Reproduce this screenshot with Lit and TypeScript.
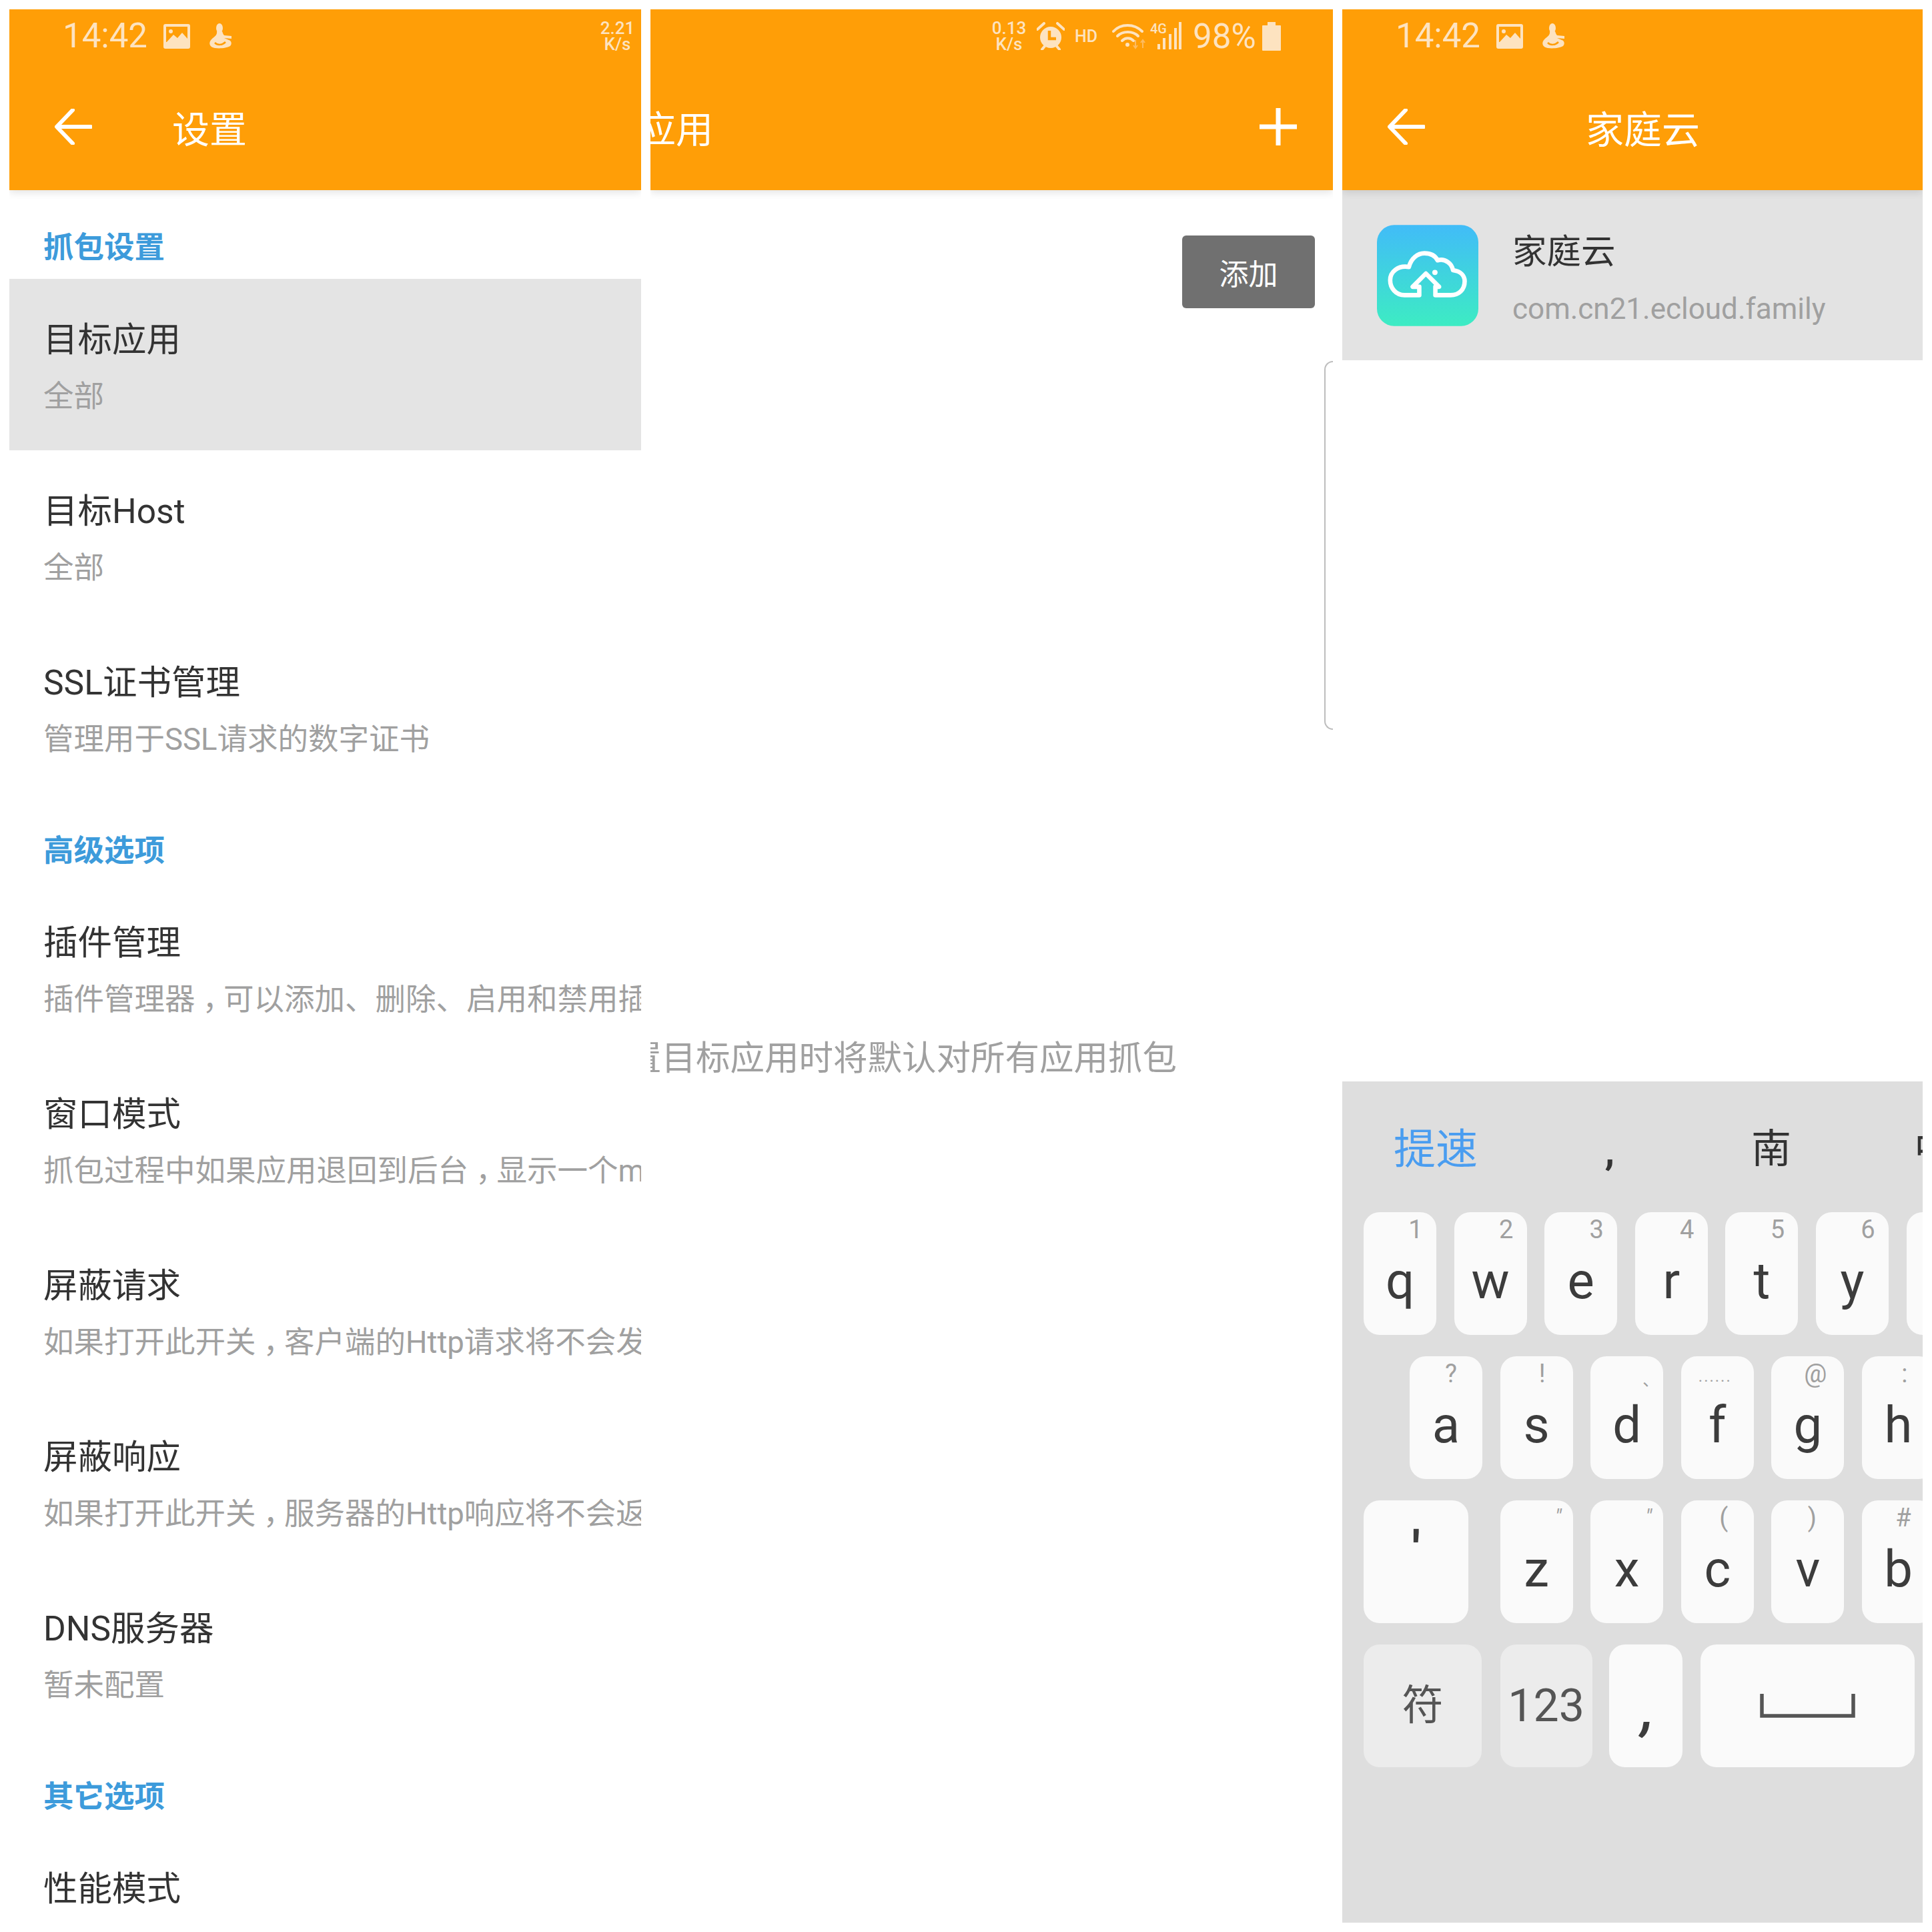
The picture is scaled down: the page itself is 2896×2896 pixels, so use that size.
import { LitElement, html, css } from "lit";
import { customElement } from "lit/decorators.js";

type K = { k: string; h?: string; r?: number; c?: string };

const row1: K[] = [
  { k: "q", h: "1", r: 31 }, { k: "w", h: "2", r: 31 }, { k: "e", h: "3", r: 31 },
  { k: "r", h: "4", r: 31 }, { k: "t", h: "5", r: 31 }, { k: "y", h: "6", r: 31 }, { k: "u", h: "7", r: 31 },
];
const row2: K[] = [
  { k: "a", h: "?", r: 47 }, { k: "s", h: "!", r: 46 }, { k: "d", h: "、", r: 19, c: "low" },
  { k: "f", h: "......", r: 58, c: "dots" }, { k: "g", h: "@", r: 43 }, { k: "h", h: ":", r: 45 },
];
const row3: K[] = [
  { k: "z", h: "\"", r: 22, c: "quote" }, { k: "x", h: "\"", r: 22, c: "quote" },
  { k: "c", h: "(", r: 45 }, { k: "v", h: ")", r: 48 }, { k: "b", h: "#", r: 47 },
];

const pictureIcon = html`<svg class="ico" width="40" height="37" viewBox="0 0 40 37">
  <rect width="40" height="37" rx="3" fill="#fde3c0"/>
  <rect x="4" y="4" width="32" height="23" fill="#ff9e07"/>
  <circle cx="11" cy="11" r="3" fill="#fde3c0"/>
  <path d="M4 28 L15 16 L21 21 L28 13 L36 22 V29 H4Z" fill="#fde3c0"/>
</svg>`;

const personIcon = html`<svg class="ico" width="36" height="38" viewBox="0 0 36 38">
  <ellipse cx="17" cy="7" rx="5" ry="7" fill="#fde3c0"/>
  <path d="M13 12 C14 18 9 20 5 24 C0 29 2 36 10 37 C18 38 28 37 33 34 C36 31 35 26 31 25 L24 22 L35 23 L35 19 L24 18 C22 16 22 14 21 12 Z" fill="#fde3c0"/>
  <path d="M10 29 C14 33 21 33 26 28" stroke="#ff9e07" stroke-width="2.5" fill="none"/>
</svg>`;

const alarmIcon = html`<svg class="ico" width="42" height="42" viewBox="0 0 42 42">
  <circle cx="21" cy="23" r="16" fill="#fde3c0"/>
  <path d="M19 13 V25 H29" stroke="#ff9e07" stroke-width="4.5" fill="none"/>
  <path d="M1 11 L11 2 M41 11 L31 2" stroke="#fde3c0" stroke-width="4" stroke-linecap="round"/>
  <path d="M8 41 L13 35 M34 41 L29 35" stroke="#fde3c0" stroke-width="4" stroke-linecap="round"/>
</svg>`;

const wifiIcon = html`<svg class="ico wifi" width="52" height="40" viewBox="0 0 52 40">
  <g fill="none" stroke="#fde3c0" stroke-width="4" stroke-linecap="round">
    <path d="M2 13 C13 1 33 1 45 13"/>
    <path d="M8 20 C16 12 31 12 39 20"/>
    <path d="M15 27 C20 22 27 22 32 27"/>
  </g>
  <circle cx="23" cy="33" r="3" fill="#fde3c0"/>
  <g fill="none" stroke="#fdbb5f" stroke-width="2">
    <path d="M35 26 V38 M32 34 L35 38 L38 34"/>
    <path d="M46 38 V26 M43 30 L46 26 L49 30"/>
  </g>
</svg>`;

const signalIcon = html`<svg class="ico" width="48" height="42" viewBox="0 0 48 42">
  <text x="0" y="17" class="sigtext">4G</text>
  <g fill="#fde3c0">
    <rect x="11" y="33" width="4" height="8"/>
    <rect x="19" y="24" width="4" height="17"/>
    <rect x="28" y="18" width="4" height="23"/>
    <rect x="36" y="9" width="4" height="32"/>
    <rect x="43" y="0" width="4" height="41"/>
  </g>
</svg>`;

const batteryIcon = html`<svg class="ico" width="28" height="43" viewBox="0 0 28 43">
  <path d="M8 0 H20 V5 H27 Q28 5 28 6 V42 Q28 43 27 43 H1 Q0 43 0 42 V6 Q0 5 1 5 H8Z" fill="#fde3c0"/>
</svg>`;

const backIcon = html`<svg class="back" width="56" height="54" viewBox="0 0 56 54">
  <path d="M54 27 H4 M27 2 L3 27 L27 52" fill="none" stroke="#fff" stroke-width="6" stroke-linecap="round" stroke-linejoin="round"/>
</svg>`;

const plusIcon = html`<svg class="plus" width="56" height="58" viewBox="0 0 56 58">
  <path d="M28 1 V57 M0 29 H56" stroke="#fff" stroke-width="7" fill="none"/>
</svg>`;

const cloudIcon = html`<svg class="appicon" width="152" height="152" viewBox="70 50 460 458">
  <defs><linearGradient id="g" x1="0" y1="0" x2="0" y2="1"><stop offset="0" stop-color="#41bcf8"/><stop offset="1" stop-color="#3decc3"/></linearGradient></defs>
  <rect x="70" y="50" width="460" height="458" rx="78" fill="url(#g)"/>
  <path d="M262 368 H195 C155 368 130 335 130 300 C130 262 165 232 215 240 C225 200 255 178 285 178 C315 178 335 190 345 210 C380 200 410 225 415 255 C450 260 468 280 468 305 C468 345 440 368 405 368 H335 V330 H352 L292 270 L232 330 H262 Z" fill="none" stroke="#fff" stroke-width="20" stroke-linejoin="round"/>
  <circle cx="333" cy="265" r="12" fill="#fff"/>
</svg>`;

const spaceIcon = html`<svg width="143" height="36" viewBox="0 0 143 36">
  <path d="M3 0 V33 H140 V0" fill="none" stroke="#555" stroke-width="5.5"/>
</svg>`;

@customElement("app-root")
export class AppRoot extends LitElement {
  static styles = css`
    :host { display: block; width: 2896px; height: 2896px; background: #fff;
      font-family: Roboto, "Noto Sans CJK SC", sans-serif; }
    * { box-sizing: border-box; }
    .page { display: grid; grid-template-columns: 947px 1023px 870px; column-gap: 14px; padding: 14px; height: 2896px; }
    .panel { position: relative; height: 2868px; overflow: hidden; background: #fff; display: flex; flex-direction: column; }
    .appbar { height: 271px; flex: none; background: #ff9e07; box-shadow: 0 3px 12px rgba(0,0,0,.12); position: relative; z-index: 2; }
    .status { height: 80px; display: flex; align-items: center; color: #fde3c0; padding-left: 80px; }
    .time { font-size: 51px; width: 123px; line-height: 80px; margin-right: 28px; white-space: nowrap; font-weight: 400; }
    .ico { display: block; flex: none; }
    .gapico { margin-left: 27px; }
    .speed { font-size: 26px; line-height: 24px; font-weight: 500; text-align: center; width: 53px; white-space: nowrap; }
    .speed.end { margin-left: auto; margin-right: 9px; }
    .status.right { justify-content: flex-end; padding: 0 78px 0 0; }
    .hd { font-size: 25px; font-weight: 500; margin: 0 23px 0 15px; width: 33px; }
    .alarm { margin-left: 15px; }
    .wifi { margin-right: 5px; }
    .sigtext { font: 500 20px Roboto, sans-serif; fill: #fde3c0; }
    .pct { font-size: 51px; margin: 0 12px 0 16px; font-weight: 400; width: 92px; white-space: nowrap; }
    .bar { height: 191px; display: flex; align-items: center; color: #fff; font-size: 56px; white-space: nowrap; }
    .back { margin-left: 68px; flex: none; }
    .t1 { margin-left: 120px; }
    .t2 { margin-left: -130px; }
    .t3 { margin-left: 241px; font-size: 57px; }
    .plus { margin-left: auto; margin-right: 54px; }

    .section { height: 133px; padding-top: 57px; padding-left: 51px; font-size: 45.5px; line-height: 60px; font-weight: 700; color: #3d9bdb; flex: none; }
    .row { height: 257px; padding: 62px 0 0 51px; flex: none; white-space: nowrap; }
    .row.sel { background: #e4e4e4; }
    .title { font-size: 51.5px; line-height: 60px; color: #333; }
    .desc { font-size: 45.5px; line-height: 54px; margin-top: 28px; color: #a0a0a0; }
    .fwc { display: inline-block; transform: translateX(11px); margin-right: -3px; }

    .addbtn { align-self: flex-end; margin: 68px 27px 0 0; width: 199px; height: 109px; border-radius: 6px; background: #707070; color: #fff; font-size: 44px; display: flex; align-items: center; justify-content: center; }
    .empty { margin-top: 1095px; padding-right: 234px; display: flex; justify-content: flex-end; font-size: 51.5px; line-height: 60px; color: #a0a0a0; white-space: nowrap; }
    .edge { position: absolute; right: 0; top: 527px; width: 13px; height: 553px; border: 2px solid #bdbdbd; border-right: none; border-radius: 18px 0 0 18px; }

    .app { height: 255px; flex: none; background: #e3e3e3; display: flex; align-items: center; padding-left: 52px; }
    .appicon { display: block; flex: none; }
    .appinfo { margin-left: 51px; margin-top: 13px; white-space: nowrap; }
    .appname { font-size: 51.5px; line-height: 60px; color: #333; }
    .apppkg { font-size: 44px; line-height: 54px; margin-top: 28px; color: #a0a0a0; }

    .keyboard { margin-top: auto; height: 1261px; flex: none; background: #dedede; overflow: hidden; }
    .cands { height: 196px; display: flex; align-items: center; padding: 0 0 5px 77px; white-space: nowrap; font-size: 60px; color: #333; }
    .cand-hi { font-size: 63px; color: #4a9df0; }
    .cand-comma { width: 40px; margin-left: 178px; font-weight: 700; text-align: center; padding-top: 16px; flex: none; }
    .cand-nan { margin-left: 192px; flex: none; }
    .cand-zh { margin-left: 184px; flex: none; }
    .krow { display: flex; gap: 26.6px; height: 184px; margin-bottom: 32px; padding-left: 32px; width: 900px; overflow: hidden; }
    .krow.in { padding-left: 101px; }
    .key { position: relative; flex: none; width: 109px; height: 184px; border-radius: 24px; background: #fafafa; color: #3c3c3c; text-align: center; font-size: 76px; line-height: 100px; padding-top: 53px; }
    .key.apos { width: 157px; margin-right: 21px; padding-top: 24px; font-weight: 700; }
    .hint { position: absolute; top: 8px; transform: translateX(50%); font-size: 38px; line-height: 36px; color: #a0a0a0; white-space: nowrap; }
    .hint.low { font-size: 24px; top: 18px; }
    .hint.dots { font-size: 24px; letter-spacing: 2px; top: 12px; }
    .hint.quote { font-size: 32px; font-style: italic; top: 6px; }
    .func { height: 184px; padding-top: 0; display: flex; align-items: center; justify-content: center; color: #555; background: #ececec; }
    .k-sym { width: 177px; margin-right: 1px; font-size: 62px; }
    .k-num { width: 138px; font-size: 68px; margin-right: -1px; }
    .k-comma { width: 110px; background: #fafafa; font-size: 88px; font-style: italic; font-weight: 500; color: #3c3c3c; padding: 8px 0 0 6px; }
    .k-space { width: 321px; background: #fafafa; }
  `;

  private desc(d: string) {
    const parts = d.split("，");
    return parts.map((p, i) => html`${p}${i < parts.length - 1 ? html`<span class="fwc">，</span>` : ""}`);
  }

  private settingsRow(t: string, d: string, sel = false) {
    return html`<div class="row ${sel ? "sel" : ""}"><div class="title">${t}</div><div class="desc">${this.desc(d)}</div></div>`;
  }

  private key(k: K) {
    return html`<div class="key">${k.k}${k.h
      ? html`<span class="hint ${k.c ?? ""}" style="right:${k.r}px">${k.h}</span>`
      : ""}</div>`;
  }

  private statusLeft() {
    return html`<span class="time">14:42</span>${pictureIcon}<span class="gapico">${personIcon}</span>`;
  }

  render() {
    return html`<div class="page">
      <section class="panel">
        <header class="appbar">
          <div class="status">${this.statusLeft()}<div class="speed end">2.21<br />K/s</div></div>
          <div class="bar">${backIcon}<span class="t1">设置</span></div>
        </header>
        <div class="section">抓包设置</div>
        ${this.settingsRow("目标应用", "全部", true)}
        ${this.settingsRow("目标Host", "全部")}
        ${this.settingsRow("SSL证书管理", "管理用于SSL请求的数字证书")}
        <div class="section">高级选项</div>
        ${this.settingsRow("插件管理", "插件管理器，可以添加、删除、启用和禁用插件")}
        ${this.settingsRow("窗口模式", "抓包过程中如果应用退回到后台，显示一个mini窗口")}
        ${this.settingsRow("屏蔽请求", "如果打开此开关，客户端的Http请求将不会发送")}
        ${this.settingsRow("屏蔽响应", "如果打开此开关，服务器的Http响应将不会返回")}
        ${this.settingsRow("DNS服务器", "暂未配置")}
        <div class="section">其它选项</div>
        ${this.settingsRow("性能模式", "")}
      </section>

      <section class="panel">
        <header class="appbar">
          <div class="status right">
            <div class="speed">0.13<br />K/s</div>
            <span class="alarm">${alarmIcon}</span>
            <span class="hd">HD</span>
            ${wifiIcon}${signalIcon}
            <span class="pct">98%</span>
            ${batteryIcon}
          </div>
          <div class="bar"><span class="t2">目标应用</span>${plusIcon}</div>
        </header>
        <div class="addbtn">添加</div>
        <div class="empty">未设置目标应用时将默认对所有应用抓包</div>
        <div class="edge"></div>
      </section>

      <section class="panel">
        <header class="appbar">
          <div class="status">${this.statusLeft()}</div>
          <div class="bar">${backIcon}<span class="t3">家庭云</span></div>
        </header>
        <div class="app">
          ${cloudIcon}
          <div class="appinfo">
            <div class="appname">家庭云</div>
            <div class="apppkg">com.cn21.ecloud.family</div>
          </div>
        </div>
        <div class="keyboard">
          <div class="cands">
            <span class="cand-hi">提速</span>
            <span class="cand-comma">,</span>
            <span class="cand-nan">南</span>
            <span class="cand-zh">中</span>
          </div>
          <div class="krow">${row1.map((k) => this.key(k))}</div>
          <div class="krow in">${row2.map((k) => this.key(k))}</div>
          <div class="krow">
            <div class="key apos">'</div>
            ${row3.map((k) => this.key(k))}
          </div>
          <div class="krow">
            <div class="key func k-sym">符</div>
            <div class="key func k-num">123</div>
            <div class="key func k-comma">,</div>
            <div class="key func k-space">${spaceIcon}</div>
          </div>
        </div>
      </section>
    </div>`;
  }
}
